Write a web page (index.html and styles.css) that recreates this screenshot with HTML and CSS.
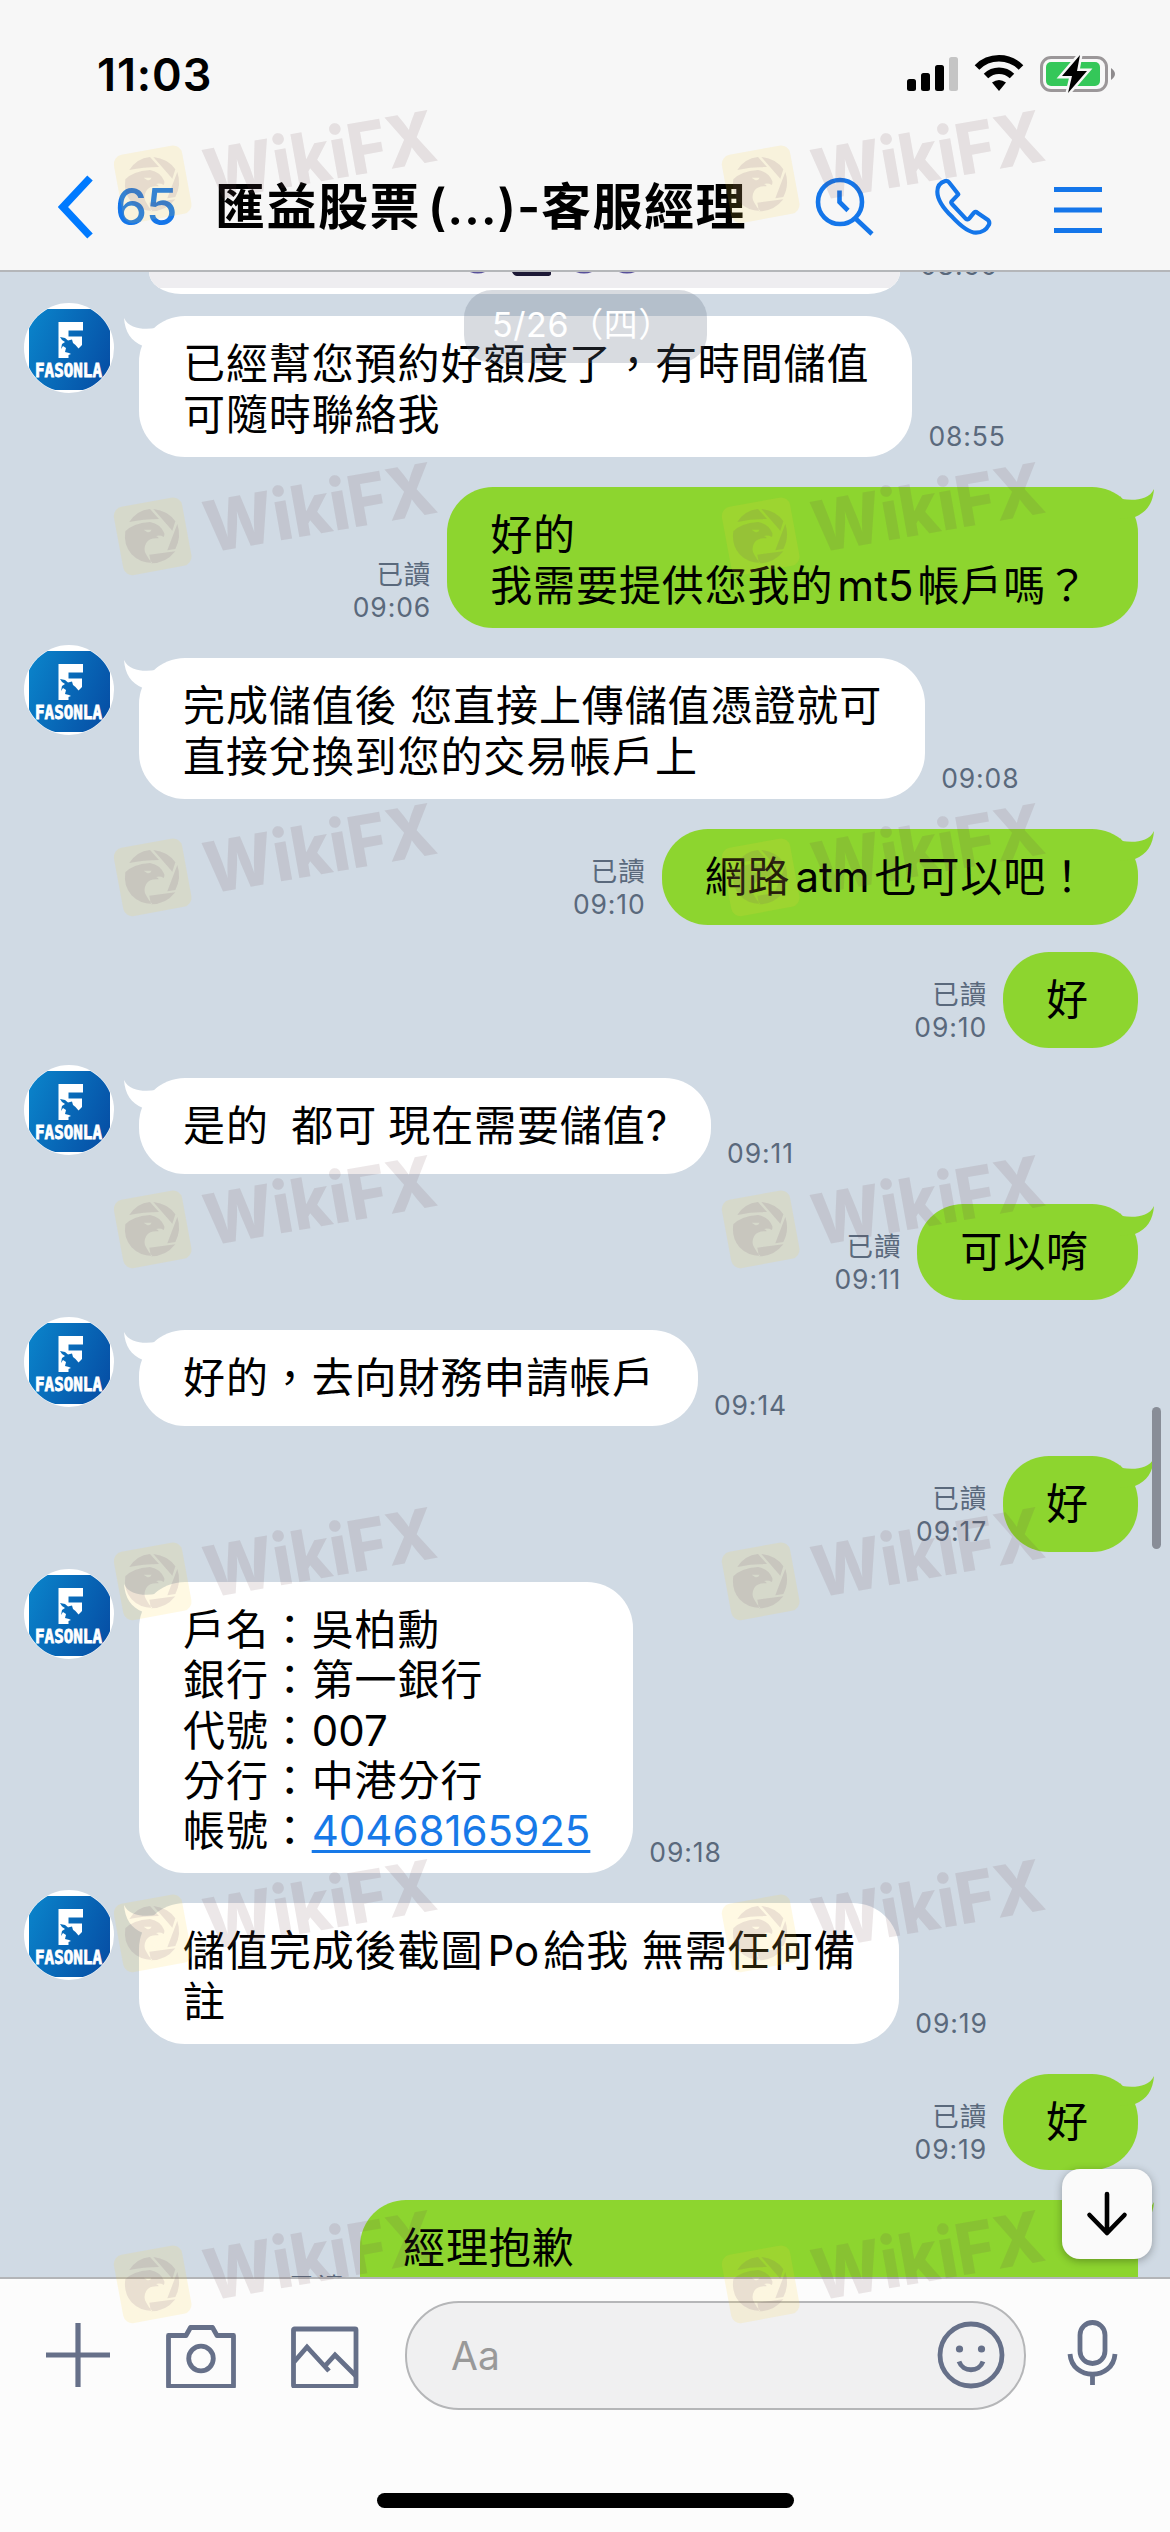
FILE: index.html
```html
<!DOCTYPE html>
<html lang="zh-Hant">
<head>
<meta charset="utf-8">
<title>匯益股票 (...)-客服經理</title>
<link rel="stylesheet" href="styles.css">
</head>
<body>
<svg class="defs" width="0" height="0" aria-hidden="true">
  <defs>
    <linearGradient id="blue" x1="0" y1="0.3" x2="1" y2="0.7">
      <stop offset="0" stop-color="#0a80c8"/>
      <stop offset="1" stop-color="#0650a6"/>
    </linearGradient>
    <clipPath id="disc"><circle cx="45" cy="45" r="44.5"/></clipPath>
    <symbol id="avatar" viewBox="0 0 90 90">
      <circle cx="45" cy="45" r="45" fill="#fff"/>
      <rect x="5" y="6" width="81" height="81" fill="url(#blue)" clip-path="url(#disc)"/>
      <path fill="#fff" d="M34.500 19H59V27.500H44.500V33.500H58V42L54.500 45.500L51.500 42L49 40L48 36.500L44 37.500L41 35L36 34L38 37L41 39L38 41L37 46L39 43L42 45L41 49L45 50L47 51L44.500 52V55H34.500Z"/>
      <text class="avatar-name" x="11" y="74" textLength="67" lengthAdjust="spacingAndGlyphs">FASONLA</text>
    </symbol>
    <symbol id="tail" viewBox="0 0 34 30">
      <path d="M34 0C33 14 27 23 15 28L0 30V7L2 10C14 12 29 11 34 0Z"/>
    </symbol>
    <symbol id="mark" viewBox="0 0 345 130">
      <g transform="translate(0 25) scale(.3333)">
        <rect class="mark-tile" x="54" y="65" width="208" height="208" rx="28" transform="rotate(-10.500 158 169)"/>
        <path class="mark-ink" d="M88 126Q110 91 150 87L177 117Q130 117 88 126ZM160 87Q204 92 226 124L217 152ZM232 132Q245 170 226 207L202 211ZM226 214Q198 250 153 250L148 224ZM76 154Q98 130 150 126Q182 132 193 160Q194 167 191 171Q181 164 168 168Q176 170 176 175Q150 172 139 188Q128 208 139 224Q146 238 157 249Q118 248 94 222Q70 194 76 154ZM131 149L155 149Q150 159 141 156Z" fill-rule="evenodd"/>
      </g>
      <text class="mark-text" transform="translate(115 97) rotate(-10)" x="-6" y="0" textLength="234" lengthAdjust="spacingAndGlyphs">WikiFX</text>
    </symbol>
  </defs>
</svg>
<div class="phone">
  <header class="header">
    <div class="status">
      <span class="clock">11:03</span>
      <svg class="status-icons" width="216" height="42" viewBox="0 0 216 42">
        <rect x="0" y="25" width="9" height="12" rx="2.500"/>
        <rect x="14" y="19" width="9" height="18" rx="2.500"/>
        <rect x="28" y="11" width="9" height="26" rx="2.500"/>
        <rect x="42" y="3" width="9" height="34" rx="2.500" fill="#c5c5c5"/>
        <g fill="none" stroke="#000" stroke-width="6.500">
          <path d="M70 13.500A31 31 0 0 1 114 13.500"/>
          <path d="M79 22A19 19 0 0 1 105 22"/>
        </g>
        <path d="M85 28.500Q92 23.500 99 28.500L92 37Z"/>
        <rect x="134.500" y="3.500" width="65" height="33" rx="9.500" fill="#f8f8f8" stroke="#9b9799" stroke-width="3"/>
        <rect x="139" y="8" width="54" height="24" rx="5" fill="#34c759"/>
        <path d="M204 14Q212 20 204 26Z" fill="#8e8b8d"/>
        <path d="M173 1L155 22H165L161 39L180 17H170Z" stroke="#f7f7f7" stroke-width="5" paint-order="stroke"/>
      </svg>
    </div>
    <nav class="nav">
      <svg class="back" width="36" height="64" viewBox="0 0 36 64"><path d="M32 3L5 32L32 61" fill="none" stroke="#007aff" stroke-width="7.500"/></svg>
      <span class="unread">65</span>
      <h1 class="title">匯益股票<span class="title-latin">(...)-</span>客服經理</h1>
      <svg class="search" width="60" height="60" viewBox="0 0 60 60" fill="none" stroke="#1476ea" stroke-width="4.600"><circle cx="25" cy="25" r="22"/><path d="M24.500 13.500V25L33 33.500M40.500 41.500L57 57"/></svg>
      <svg class="call" width="60" height="60" viewBox="99 411 180 180" fill="none" stroke="#1476ea" stroke-width="12.500" stroke-linejoin="round"><path d="M136 423Q144 422 148 428L175 463L155 484Q152 488 156 492L197 536Q203 541 208 535L222 518Q227 513 232 518L264 540Q270 546 267 554Q255 578 228 578Q200 577 158 532Q112 488 112 455Q112 430 136 423Z"/></svg>
      <svg class="menu" width="48" height="60" viewBox="0 0 48 60" stroke="#1476ea" stroke-width="4.800"><path d="M0 12.500H48M0 33H48M0 53.500H48"/></svg>
    </nav>
  </header>

  <main class="chat">
    <div class="row in photo-row">
      <div class="photo"><svg width="751" height="22" viewBox="0 0 751 22"><rect width="751" height="16" fill="#eeedf0"/><path d="M363 0H402V2Q402 4 398 4H368Q365 4 363 0Z" fill="#1d1936"/><path d="M321 0H336Q329 3 321 0M427 0H443Q435 3 427 0M470 0H486Q478 3 470 0" fill="#58509a"/></svg></div>
      <span class="meta">08:50</span>
    </div>

    <div class="row in">
      <svg class="avatar"><use href="#avatar"/></svg>
      <div class="bubble two"><svg class="tail"><use href="#tail"/></svg>已經幫您預約好額度了，有時間儲值<br>可隨時聯絡我</div>
      <span class="meta">08:55</span>
    </div>
    <div class="row out">
      <span class="meta">已讀<br>09:06</span>
      <div class="bubble two"><svg class="tail"><use href="#tail"/></svg>好的<br>我需要提供您我的<span class="latin w84">mt5</span>帳戶嗎？</div>
    </div>
    <div class="row in">
      <svg class="avatar"><use href="#avatar"/></svg>
      <div class="bubble two"><svg class="tail"><use href="#tail"/></svg>完成儲值後 您直接上傳儲值憑證就可<br>直接兌換到您的交易帳戶上</div>
      <span class="meta">09:08</span>
    </div>
    <div class="row out">
      <span class="meta">已讀<br>09:10</span>
      <div class="bubble"><svg class="tail"><use href="#tail"/></svg>網路<span class="latin w84">atm</span>也可以吧！</div>
    </div>
    <div class="row out follow">
      <span class="meta">已讀<br>09:10</span>
      <div class="bubble">好</div>
    </div>
    <div class="row in">
      <svg class="avatar"><use href="#avatar"/></svg>
      <div class="bubble spaced"><svg class="tail"><use href="#tail"/></svg>是的&nbsp; 都可 現在需要儲值?</div>
      <span class="meta">09:11</span>
    </div>
    <div class="row out">
      <span class="meta">已讀<br>09:11</span>
      <div class="bubble"><svg class="tail"><use href="#tail"/></svg>可以唷</div>
    </div>
    <div class="row in">
      <svg class="avatar"><use href="#avatar"/></svg>
      <div class="bubble"><svg class="tail"><use href="#tail"/></svg>好的，去向財務申請帳戶</div>
      <span class="meta">09:14</span>
    </div>
    <div class="row out">
      <span class="meta">已讀<br>09:17</span>
      <div class="bubble"><svg class="tail"><use href="#tail"/></svg>好</div>
    </div>
    <div class="row in">
      <svg class="avatar"><use href="#avatar"/></svg>
      <div class="bubble five"><svg class="tail"><use href="#tail"/></svg>戶名：吳柏勳<br>銀行：第一銀行<br>代號：<span class="digits">007</span><br>分行：中港分行<br>帳號：<a class="digits account">40468165925</a></div>
      <span class="meta">09:18</span>
    </div>
    <div class="row in">
      <svg class="avatar"><use href="#avatar"/></svg>
      <div class="bubble two"><svg class="tail"><use href="#tail"/></svg>儲值完成後截圖<span class="latin w60">Po</span>給我 無需任何備<br>註</div>
      <span class="meta">09:19</span>
    </div>
    <div class="row out">
      <span class="meta">已讀<br>09:19</span>
      <div class="bubble"><svg class="tail"><use href="#tail"/></svg>好</div>
    </div>
    <div class="row out last">
      <span class="meta">已讀<br>09:20</span>
      <div class="bubble long"><svg class="tail"><use href="#tail"/></svg>經理抱歉</div>
    </div>

    <div class="date">5/26（四）</div>
    <div class="scrollbar"></div>
    <button class="to-bottom" aria-label="捲到最新訊息"><svg width="44" height="48" viewBox="0 0 44 48" fill="none" stroke="#000" stroke-width="4.600" stroke-linecap="round" stroke-linejoin="round"><path d="M22 4V43M4.500 25L22 43L39.500 25"/></svg></button>
  </main>

  <footer class="composer">
    <div class="tools">
      <svg class="plus" width="64" height="66" viewBox="0 0 64 66" stroke-width="5.200"><path d="M32 1V65M0 33H64"/></svg>
      <svg class="camera" width="70" height="66" viewBox="0 0 70 66"><path d="M2.500 13.500H20L24.500 5.500H46.500L51 13.500H67.500V64.500H2.500Z" stroke-linejoin="round"/><circle cx="35" cy="36.500" r="12.300"/></svg>
      <svg class="picture" width="68" height="66" viewBox="0 0 68 66"><rect x="2.500" y="7" width="62.500" height="57.500" rx="1"/><path d="M3 40L16 25L38 49M33.500 44.500L44 33L65 54" stroke-linejoin="miter"/></svg>
      <div class="field">
        <span class="placeholder">Aa</span>
        <svg width="68" height="68" viewBox="0 0 68 68"><circle cx="34" cy="34" r="31"/><circle class="eye" cx="22.500" cy="28" r="3.600"/><circle class="eye" cx="44.500" cy="28" r="3.600"/><path d="M22 40.500C26 51.500 42 51.500 46 40.500"/></svg>
      </div>
      <svg class="mic" width="52" height="70" viewBox="0 0 52 70"><rect x="14" y="2.500" width="25" height="41" rx="12.500"/><path d="M4 34C6 61 47 61 49 34M26.500 54V65"/></svg>
    </div>
    <div class="home"></div>
  </footer>

  <svg class="watermarks" viewBox="0 0 1170 2532">
    <use href="#mark" x="100" y="103" width="345" height="130"/><use href="#mark" x="708" y="103" width="345" height="130"/>
    <use href="#mark" x="100" y="455" width="345" height="130"/><use href="#mark" x="708" y="455" width="345" height="130"/>
    <use href="#mark" x="100" y="796" width="345" height="130"/><use href="#mark" x="708" y="796" width="345" height="130"/>
    <use href="#mark" x="100" y="1148" width="345" height="130"/><use href="#mark" x="708" y="1148" width="345" height="130"/>
    <use href="#mark" x="100" y="1500" width="345" height="130"/><use href="#mark" x="708" y="1500" width="345" height="130"/>
    <use href="#mark" x="100" y="1852" width="345" height="130"/><use href="#mark" x="708" y="1852" width="345" height="130"/>
    <use href="#mark" x="100" y="2203" width="345" height="130"/><use href="#mark" x="708" y="2203" width="345" height="130"/>
  </svg>
</div>
</body>
</html>
```

FILE: styles.css
```css
* { box-sizing: border-box; }
html, body { margin: 0; padding: 0; }
body {
  width: 1170px;
  font-family: Inter, "Noto Sans CJK TC", sans-serif;
  color: #000;
}
svg { display: block; flex: none; }
.defs { position: absolute; }
.phone {
  position: relative;
  width: 1170px;
  height: 2532px;
  overflow: hidden;
  display: flex;
  flex-direction: column;
}

/* header */
.header {
  height: 272px;
  flex: none;
  background: #f7f7f7;
  border-bottom: 2px solid #b4b6b9;
}
.status {
  height: 149px;
  display: flex;
  justify-content: space-between;
  padding: 54px 47px 0 97px;
}
.clock {
  font-size: 45px;
  font-weight: 600;
  line-height: 41px;
  letter-spacing: .9px;
}
.nav {
  height: 116px;
  display: flex;
  align-items: center;
  padding: 0 0 0 58px;
}
.unread {
  margin-left: 21px;
  width: 100px;
  font-size: 51px;
  line-height: 60px;
  font-weight: 500;
  letter-spacing: -1px;
  color: #1476ea;
}
.title {
  margin: 0;
  width: 535px;
  font-size: 50px;
  line-height: 60px;
  letter-spacing: 1.5px;
  font-weight: 600;
  white-space: nowrap;
}
.title-latin {
  display: inline-block;
  width: 120px;
  text-align: right;
  letter-spacing: .8px;
}
.search { margin-left: 65px; }
.call { margin-left: 58px; }
.menu { margin-left: 61px; }

/* chat */
.chat {
  position: relative;
  height: 2005px;
  flex: none;
  overflow: hidden;
  background: #d0dae4;
}
.row {
  display: flex;
  align-items: flex-end;
  margin-top: 30px;
}
.row.in { padding-left: 24px; }
.row.out { justify-content: flex-end; padding-right: 32px; }
.row.follow { margin-top: 27px; }
.row.photo-row { margin: 0 0 22px; padding-left: 149px; height: 22px; }
.photo-row + .row { margin-top: 0; }
.photo {
  width: 751px;
  height: 22px;
  background: #fff;
  overflow: hidden;
  border-radius: 0 0 32px 32px / 0 0 22px 22px;
}
.photo-row .meta { align-self: flex-start; line-height: 20px; margin: -17px 0 0 20px; }
.avatar {
  width: 90px;
  height: 90px;
  align-self: flex-start;
  margin: -13px 25px 0 0;
}
.avatar-name { font: 900 19px "DejaVu Sans Mono", "Liberation Mono", monospace; fill: #fff; stroke: #fff; stroke-width: .8px; }
.bubble {
  position: relative;
  height: 96px;
  padding: 22px 43px 0 44px;
  border-radius: 46px;
  background: #fff;
  font-size: 42px;
  line-height: 51px;
  letter-spacing: .9px;
  white-space: nowrap;
}
.out .bubble { background: #8dd52f; padding: 22px 49px 0 43px; }
.two { height: 141px; }
.five { height: 291px; line-height: 50.250px; padding-top: 23px; }
.spaced { word-spacing: -1.5px; }
.long { width: 778px; height: 200px; }
.tail {
  position: absolute;
  width: 34px;
  height: 30px;
  left: -15px;
  top: 2px;
  fill: #fff;
  transform: scaleX(-1);
}
.out .tail { left: auto; right: -16px; fill: #8dd52f; transform: none; }
.latin {
  display: inline-block;
  text-align: center;
  letter-spacing: 0;
}
.w84 { width: 84px; }
.w60 { width: 60px; }
.digits { letter-spacing: 0; }
.account {
  color: #1779e8;
  text-decoration: underline;
  text-decoration-thickness: 3px;
  text-underline-offset: 4px;
}
.meta {
  margin: 0 16px 4px;
  font-size: 26.500px;
  line-height: 33px;
  letter-spacing: .9px;
  color: #5a697c;
  text-align: right;
}
.last .meta { align-self: flex-start; margin-top: 71px; }
.date {
  position: absolute;
  left: 464px;
  top: 18px;
  width: 243px;
  height: 73px;
  border-radius: 28px;
  background: rgba(90, 105, 125, .24);
  color: #fff;
  font-size: 34px;
  line-height: 70px;
  padding-left: 28px;
  letter-spacing: .6px;
  white-space: nowrap;
}
.scrollbar {
  position: absolute;
  left: 1152px;
  top: 1135px;
  width: 9px;
  height: 142px;
  border-radius: 5px;
  background: #888d97;
}
.to-bottom {
  position: absolute;
  left: 1062px;
  top: 1897px;
  width: 90px;
  height: 90px;
  border: 0;
  border-radius: 18px;
  background: #fafafa;
  box-shadow: 0 2px 8px rgba(0, 0, 0, .3);
  display: flex;
  align-items: center;
  justify-content: center;
  padding: 0;
}

/* composer */
.composer {
  flex: 1;
  background: #fcfcfc;
  border-top: 2px solid #b3b5b8;
}
.tools {
  display: flex;
  align-items: center;
  height: 152px;
  padding-left: 46px;
  fill: none;
  stroke: #667089;
  stroke-width: 4.800;
}
.camera { margin-left: 56px; }
.picture { margin-left: 55px; }
.field {
  margin-left: 46px;
  width: 621px;
  height: 109px;
  border: 2px solid #b5b6b8;
  border-radius: 54px;
  background: #f0f0f1;
  display: flex;
  align-items: center;
  justify-content: space-between;
  padding: 0 19px 0 44px;
}
.eye { fill: #667089; stroke: none; }
.placeholder { font-size: 39px; color: #999; }
.mic { margin-left: 40px; }
.home {
  width: 417px;
  height: 15px;
  margin: 62px 0 0 377px;
  border-radius: 8px;
  background: #000;
}

/* watermark overlay */
.watermarks {
  position: absolute;
  inset: 0;
  width: 1170px;
  height: 2532px;
  pointer-events: none;
}
.mark-tile { fill: rgba(255, 210, 60, .14); }
.mark-ink { fill: rgba(110, 70, 110, .13); }
.mark-text { font: 800 71px Inter, sans-serif; fill: rgba(110, 70, 80, .13); }
```
